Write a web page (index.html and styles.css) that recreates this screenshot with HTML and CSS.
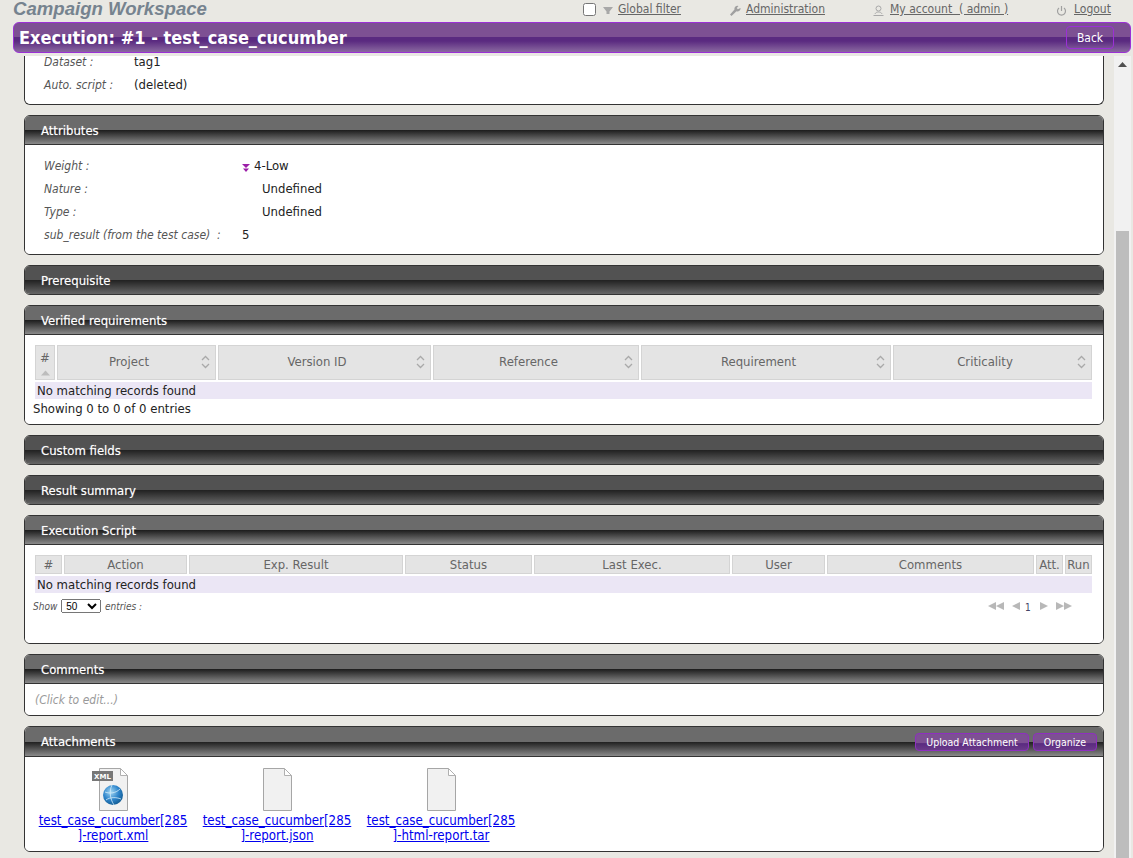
FILE: index.html
```html
<!DOCTYPE html>
<html lang="en">
<head>
    <meta charset="UTF-8">
    <title>Campaign Workspace</title>
    <link rel="stylesheet" href="styles.css">
</head>
<body>
    <div class="top-bar">
        <div class="workspace-title">Campaign Workspace</div>
        <div class="top-menu">
            <span class="menu-item filter-item">
                <input type="checkbox" class="filter-check">
                <svg class="menu-icon" width="10" height="9" viewBox="0 0 10 9"><path d="M0 1h10L6.500 5.500V8h-3V5.500z" fill="#a8a8a8"/></svg>
                <a href="#">Global filter</a>
            </span>
            <span class="menu-item admin-item">
                <svg class="menu-icon" width="11" height="11" viewBox="0 0 11 11"><path d="M0 9.500l4.500-5a3 3 0 0 1 4-3.500L6.800 3l1 1.300L10.500 3a3 3 0 0 1-4 3.300L1.500 11z" fill="#a0a0a0"/></svg>
                <a href="#">Administration</a>
            </span>
            <span class="menu-item account-item">
                <svg class="menu-icon" width="11" height="11" viewBox="0 0 11 11"><circle cx="5.500" cy="3.500" r="2.500" fill="none" stroke="#a8a8a8"/><path d="M.5 10.500h10M2 8.800c.7-1.200 1.800-1.800 3.500-1.800s2.800.6 3.500 1.800" fill="none" stroke="#a8a8a8"/></svg>
                <a href="#">My account &nbsp;( admin )</a>
            </span>
            <span class="menu-item logout-item">
                <svg class="menu-icon" width="11" height="11" viewBox="0 0 11 11"><path d="M3 3a4 4 0 1 0 5 0M5.500 1v5" fill="none" stroke="#a0a0a0" stroke-width="1.200"/></svg>
                <a href="#">Logout</a>
            </span>
        </div>
    </div>

    <div class="title-bar">
        <h1>Execution: #1 - test_case_cucumber</h1>
        <button class="back-button">Back</button>
    </div>

    <div class="main">
        <div class="content">
            <div class="panel clipped-panel">
                <div class="panel-body info-body">
                    <div class="info-row"><span class="info-label">Dataset :</span><span class="info-value">tag1</span></div>
                    <div class="info-row"><span class="info-label">Auto. script :</span><span class="info-value">(deleted)</span></div>
                </div>
            </div>

            <div class="panel">
                <div class="panel-header">Attributes</div>
                <div class="panel-body attr-body">
                    <div class="attr-row"><span class="info-label">Weight :</span><span class="attr-value"><svg class="weight-icon" width="8" height="8" viewBox="0 0 8 8"><path d="M0 0h8L4 4zM1 4.500h6L4 8z" fill="#9c1fa8"/></svg>4-Low</span></div>
                    <div class="attr-row"><span class="info-label">Nature :</span><span class="attr-value indented">Undefined</span></div>
                    <div class="attr-row"><span class="info-label">Type :</span><span class="attr-value indented">Undefined</span></div>
                    <div class="attr-row"><span class="info-label">sub_result (from the test case) &nbsp;:</span><span class="attr-value">5</span></div>
                </div>
            </div>

            <div class="panel closed">
                <div class="panel-header">Prerequisite</div>
            </div>

            <div class="panel">
                <div class="panel-header">Verified requirements</div>
                <div class="panel-body table-body">
                    <div class="grid-head req-grid">
                        <div class="grid-cell num-cell">#<svg width="9" height="6" viewBox="0 0 9 6"><path d="M0 5.500L4.500 .5 9 5.500z" fill="#bcbcbc"/></svg></div>
                        <div class="grid-cell sort-cell">Project<svg class="sort-icon" width="9" height="14" viewBox="0 0 9 14"><path d="M1 5l3.500-3.500L8 5M1 9l3.500 3.500L8 9" fill="none" stroke="#a9a9a9" stroke-width="1.300"/></svg></div>
                        <div class="grid-cell sort-cell">Version ID<svg class="sort-icon" width="9" height="14" viewBox="0 0 9 14"><path d="M1 5l3.500-3.500L8 5M1 9l3.500 3.500L8 9" fill="none" stroke="#a9a9a9" stroke-width="1.300"/></svg></div>
                        <div class="grid-cell sort-cell">Reference<svg class="sort-icon" width="9" height="14" viewBox="0 0 9 14"><path d="M1 5l3.500-3.500L8 5M1 9l3.500 3.500L8 9" fill="none" stroke="#a9a9a9" stroke-width="1.300"/></svg></div>
                        <div class="grid-cell sort-cell">Requirement<svg class="sort-icon" width="9" height="14" viewBox="0 0 9 14"><path d="M1 5l3.500-3.500L8 5M1 9l3.500 3.500L8 9" fill="none" stroke="#a9a9a9" stroke-width="1.300"/></svg></div>
                        <div class="grid-cell sort-cell">Criticality<svg class="sort-icon" width="9" height="14" viewBox="0 0 9 14"><path d="M1 5l3.500-3.500L8 5M1 9l3.500 3.500L8 9" fill="none" stroke="#a9a9a9" stroke-width="1.300"/></svg></div>
                    </div>
                    <div class="empty-row">No matching records found</div>
                    <div class="table-info">Showing 0 to 0 of 0 entries</div>
                </div>
            </div>

            <div class="panel closed">
                <div class="panel-header">Custom fields</div>
            </div>

            <div class="panel closed">
                <div class="panel-header">Result summary</div>
            </div>

            <div class="panel">
                <div class="panel-header">Execution Script</div>
                <div class="panel-body script-body">
                    <div class="grid-head script-grid">
                        <div class="grid-cell">#</div>
                        <div class="grid-cell">Action</div>
                        <div class="grid-cell">Exp. Result</div>
                        <div class="grid-cell">Status</div>
                        <div class="grid-cell">Last Exec.</div>
                        <div class="grid-cell">User</div>
                        <div class="grid-cell">Comments</div>
                        <div class="grid-cell">Att.</div>
                        <div class="grid-cell">Run</div>
                    </div>
                    <div class="empty-row">No matching records found</div>
                    <div class="table-footer">
                        <div class="page-length">Show <select class="length-select"><option>50</option></select> entries :</div>
                        <div class="pager">
                            <svg width="16" height="8" viewBox="0 0 16 8"><path d="M8 0v8L0 4zM16 0v8L8 4z" fill="#b8b8b8"/></svg>
                            <svg width="8" height="8" viewBox="0 0 8 8"><path d="M8 0v8L0 4z" fill="#b8b8b8"/></svg>
                            <span class="page-number">1</span>
                            <svg width="8" height="8" viewBox="0 0 8 8"><path d="M0 0v8L8 4z" fill="#b8b8b8"/></svg>
                            <svg width="16" height="8" viewBox="0 0 16 8"><path d="M0 0v8L8 4zM8 0v8L16 4z" fill="#b8b8b8"/></svg>
                        </div>
                    </div>
                </div>
            </div>

            <div class="panel">
                <div class="panel-header">Comments</div>
                <div class="panel-body comment-body">(Click to edit...)</div>
            </div>

            <div class="panel">
                <div class="panel-header attach-header">Attachments
                    <div class="header-buttons">
                        <button class="small-button upload-button">Upload Attachment</button>
                        <button class="small-button organize-button">Organize</button>
                    </div>
                </div>
                <div class="panel-body attach-body">
                    <div class="attachment">
                        <svg class="file-icon" width="44" height="44" viewBox="0 0 44 44">
                            <defs>
                                <radialGradient id="globe" cx="40%" cy="35%" r="70%">
                                    <stop offset="0" stop-color="#a5d8f3"/>
                                    <stop offset="0.55" stop-color="#2f86cc"/>
                                    <stop offset="1" stop-color="#10588f"/>
                                </radialGradient>
                            </defs>
                            <path d="M8.500 .5h21l7 7v35h-28z" fill="#f1f1f1" stroke="#a6a6a6"/>
                            <path d="M29.500 .5v7h7z" fill="#fff" stroke="#b0b0b0"/>
                            <rect x="1" y="3" width="21" height="10" fill="#777"/>
                            <text x="11.500" y="11" class="xml-tag">XML</text>
                            <circle cx="22" cy="27" r="10" fill="url(#globe)"/>
                            <path d="M14 24c5 2 11 1 15-3M15 32c4-3 10-3 15-1M21 17c-3 6-2 14 2 20" fill="none" stroke="#d5edfa" stroke-width=".8"/>
                        </svg>
                        <a href="#">test_case_cucumber[285<br>]-report.xml</a>
                    </div>
                    <div class="attachment">
                        <svg class="file-icon" width="44" height="44" viewBox="0 0 44 44">
                            <path d="M8.500 .5h21l7 7v35h-28z" fill="#f1f1f1" stroke="#a6a6a6"/>
                            <path d="M29.500 .5v7h7z" fill="#fff" stroke="#b0b0b0"/>
                        </svg>
                        <a href="#">test_case_cucumber[285<br>]-report.json</a>
                    </div>
                    <div class="attachment">
                        <svg class="file-icon" width="44" height="44" viewBox="0 0 44 44">
                            <path d="M8.500 .5h21l7 7v35h-28z" fill="#f1f1f1" stroke="#a6a6a6"/>
                            <path d="M29.500 .5v7h7z" fill="#fff" stroke="#b0b0b0"/>
                        </svg>
                        <a href="#">test_case_cucumber[285<br>]-html-report.tar</a>
                    </div>
                </div>
            </div>
        </div>

        <div class="scrollbar">
            <div class="scroll-up">
                <svg width="9" height="5" viewBox="0 0 9 5"><path d="M0 5L4.500 0 9 5z" fill="#505050"/></svg>
            </div>
            <div class="scroll-thumb"></div>
        </div>
    </div>
</body>
</html>
```

FILE: styles.css
```css
* {
    margin: 0;
    padding: 0;
    box-sizing: border-box;
}

body {
    font-family: "DejaVu Sans Condensed", "DejaVu Sans", Verdana, sans-serif;
    font-size: 13px;
    color: #222;
    background: #e9e8e3;
    height: 858px;
    overflow: hidden;
}

.top-bar {
    height: 22px;
    position: relative;
}

.workspace-title {
    padding: 0 0 0 13px;
    font-family: "Liberation Sans", Arial, sans-serif;
    font-size: 18.600px;
    font-weight: bold;
    font-style: italic;
    line-height: 18px;
    color: #76838f;
}

.top-menu {
    position: absolute;
    top: 0;
    left: 0;
    right: 0;
    height: 18px;
    font-size: 12px;
    color: #666;
}

.top-menu a {
    color: #666;
}

.menu-item {
    position: absolute;
    top: 2px;
    display: flex;
    align-items: center;
    gap: 5px;
    white-space: nowrap;
}

.menu-icon {
    margin-top: 2px;
}

.filter-item { left: 583px; }
.admin-item { left: 730px; }
.account-item { left: 873px; gap: 6px; }
.logout-item { left: 1056px; gap: 7px; }

.filter-check {
    width: 13px;
    height: 13px;
    margin-right: 2px;
}

.title-bar {
    height: 31px;
    margin: 0 2px 0 13px;
    padding: 0 16px 0 5px;
    display: flex;
    align-items: center;
    justify-content: space-between;
    border: 1px solid #9b30d6;
    border-radius: 6px;
    background: linear-gradient(to bottom, #7d5093 0, #7d5093 48%, #5a2a80 50%, #5a2a80 62%, #8a68a0 100%);
}

.title-bar h1 {
    font-size: 18px;
    font-weight: bold;
    color: #fff;
}

.back-button {
    width: 48px;
    height: 23px;
    font-family: inherit;
    font-size: 12px;
    color: #fff;
    background: transparent;
    border: 1px solid #9b30d6;
    border-radius: 4px;
}

.main {
    height: 805px;
    margin-right: 2px;
    display: flex;
}

.content {
    flex: 1;
    padding: 0 10px 0 24px;
    overflow: hidden;
}

.panel {
    margin-bottom: 10px;
    background: #fff;
    border: 1px solid #333;
    border-radius: 6px;
    overflow: hidden;
}

.clipped-panel {
    border-top: 0;
    border-radius: 0 0 6px 6px;
    margin-top: 3px;
    overflow: visible;
}

.panel-header {
    height: 29px;
    padding: 0 6px 0 16px;
    display: flex;
    align-items: center;
    justify-content: space-between;
    font-size: 13px;
    color: #fff;
    text-shadow: 0 0 1px rgba(255, 255, 255, 0.5);
    border-bottom: 1px solid #333;
    background: linear-gradient(to bottom, #6b6b6b 0, #6b6b6b 50%, #1e1e1e 51%, #8a8a8a 100%);
}

.attach-header {
    height: 30px;
}

.closed .panel-header {
    height: 28px;
    border-bottom: 0;
    background: linear-gradient(to bottom, #525252 0, #525252 50%, #222 51%, #666 100%);
}

.panel-body {
    background: #fff;
}

.info-body {
    height: 48px;
    padding: 0 19px;
    border-radius: 0 0 6px 6px;
}

.info-row {
    height: 23px;
    display: flex;
    align-items: center;
}

.info-row:first-child {
    height: 12px;
    margin-bottom: 5px;
    line-height: 12px;
}

.info-label {
    font-style: italic;
    font-size: 12px;
    color: #555;
}

.info-row .info-label {
    width: 90px;
}

.attr-body {
    height: 109px;
    padding: 9px 19px 0;
}

.attr-row {
    height: 23px;
    display: flex;
    align-items: center;
}

.attr-row .info-label {
    width: 198px;
}

.indented {
    padding-left: 20px;
}

.weight-icon {
    margin-right: 4px;
    vertical-align: -2px;
}

.table-body {
    height: 89px;
    padding: 10px 11px 0 8px;
}

.grid-head {
    display: grid;
    gap: 2px;
    margin-bottom: 2px;
    margin-left: 2px;
}

.req-grid {
    grid-template-columns: 20px 159px 213px 206px 250px 199px;
}

.script-grid {
    grid-template-columns: 27px 123px 214px 127px 196px 93px 207px 27px 27px;
}

.grid-cell {
    height: 19px;
    display: flex;
    align-items: center;
    justify-content: center;
    background: #e4e4e4;
    border: 1px solid #d4d4d4;
    color: #666;
}

.req-grid .grid-cell {
    height: 35px;
    position: relative;
}

.req-grid .sort-cell {
    padding: 0 15px 2px 0;
}

.num-cell {
    flex-direction: column;
    gap: 5px;
}

.sort-icon {
    position: absolute;
    right: 5px;
    top: 9px;
}

.empty-row {
    height: 17px;
    line-height: 17px;
    margin-left: 2px;
    padding-left: 2px;
    background: #ebe6f5;
}

.table-info {
    margin-top: 2px;
    line-height: 15px;
}

.script-body {
    height: 98px;
    padding: 10px 11px 0 8px;
}

.table-footer {
    margin-top: 6px;
    display: flex;
    justify-content: space-between;
    align-items: center;
}

.page-length {
    font-size: 10px;
    font-style: italic;
    color: #555;
}

.length-select {
    width: 40px;
    height: 14px;
    font-size: 10px;
    margin: 0 1px;
}

.pager {
    display: flex;
    align-items: center;
    gap: 8px;
    padding-right: 20px;
}

.page-number {
    width: 7px;
    margin-left: -3px;
    padding-top: 3px;
    font-size: 10px;
    color: #446;
}

.comment-body {
    height: 31px;
    padding: 1px 10px 0;
    line-height: 31px;
    font-size: 12px;
    font-style: italic;
    color: #999;
}

.header-buttons {
    display: flex;
    gap: 4px;
}

.small-button {
    height: 18px;
    font-family: inherit;
    font-size: 10.500px;
    color: #fff;
    background: linear-gradient(to bottom, #7d5093 0, #7d5093 55%, #5a2a80 60%, #6a3a8a 100%);
    border: 1px solid #8e2fc0;
    border-radius: 4px;
}

.upload-button {
    width: 114px;
}

.organize-button {
    width: 64px;
}

.attach-body {
    height: 94px;
    display: flex;
    padding: 11px 0 0 6px;
}

.attachment {
    width: 164px;
    display: flex;
    flex-direction: column;
    align-items: center;
    text-align: center;
    font-size: 13.200px;
    line-height: 15px;
}

.attachment a {
    color: #00e;
    margin-top: 1px;
}

.file-icon {
    display: block;
}

.xml-tag {
    font-family: "DejaVu Sans", sans-serif;
    font-size: 7px;
    font-weight: bold;
    fill: #fff;
    text-anchor: middle;
}

.scrollbar {
    width: 17px;
    margin-top: 3px;
    background: #f1f1f1;
    display: flex;
    flex-direction: column;
    align-items: center;
}

.scroll-up {
    height: 175px;
    padding-top: 6px;
}

.scroll-up svg {
    display: block;
}

.scroll-thumb {
    flex: 1;
    width: 13px;
    background: #bdbdbd;
}
```
